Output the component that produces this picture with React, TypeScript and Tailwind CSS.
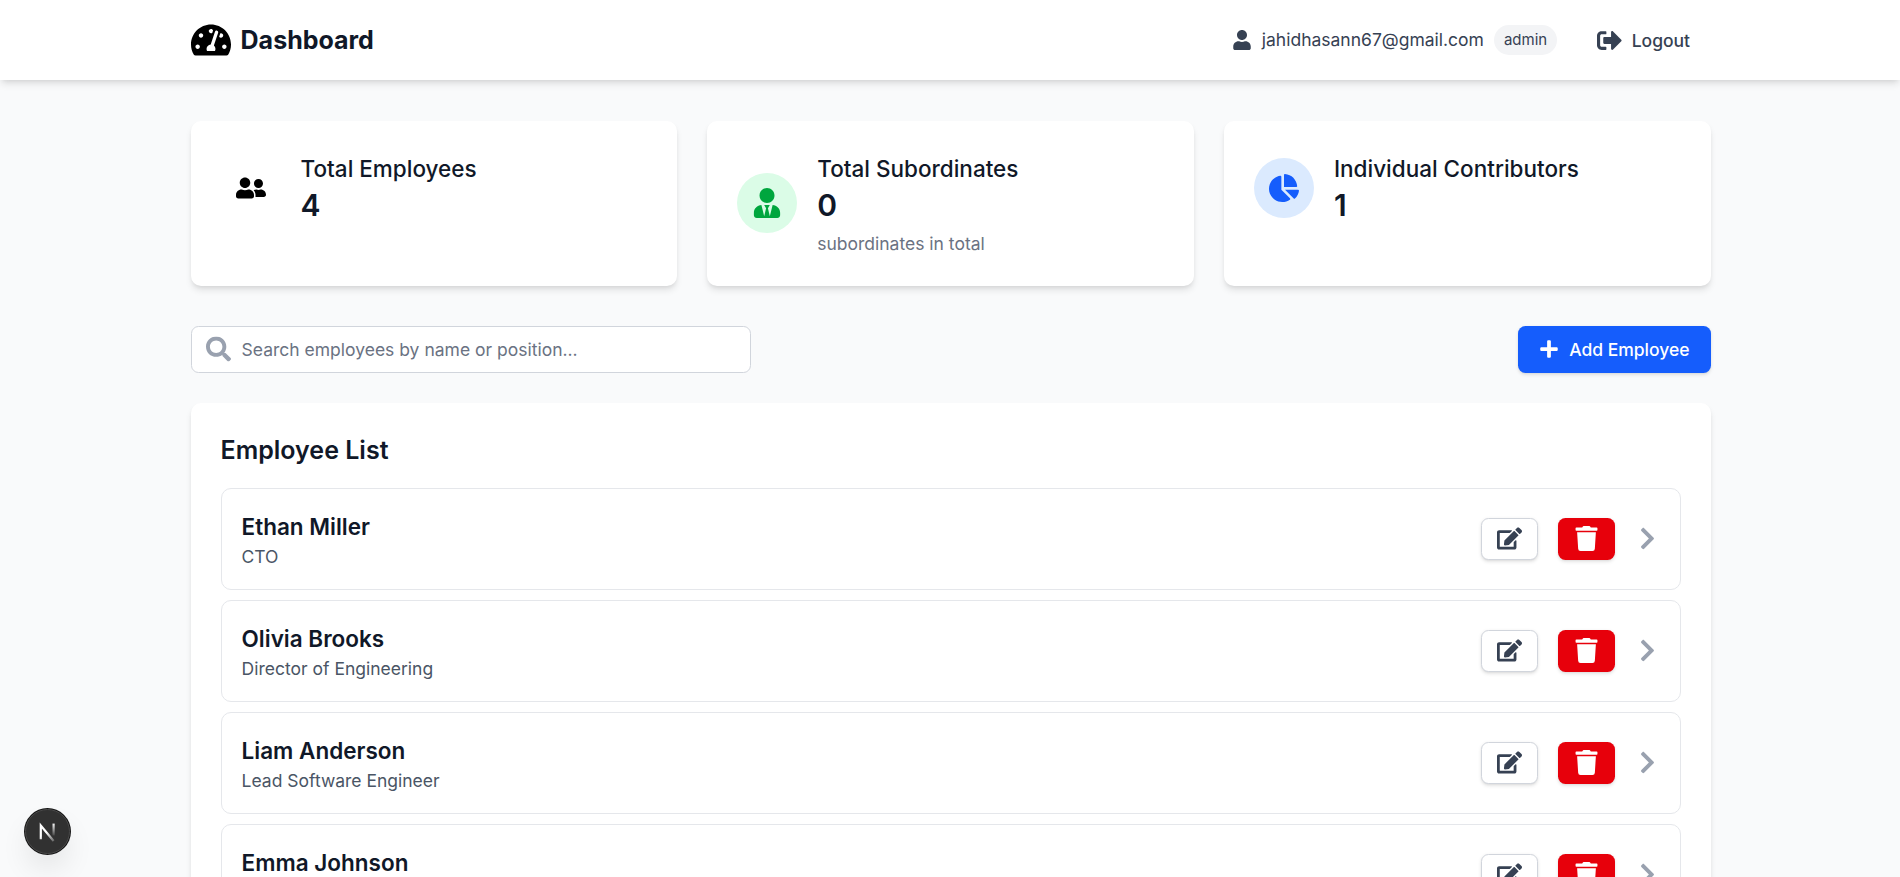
import type { ReactNode } from "react";
import {
  FaChartPie,
  FaChevronRight,
  FaEdit,
  FaPlus,
  FaSearch,
  FaSignOutAlt,
  FaTachometerAlt,
  FaTrash,
  FaUser,
  FaUserFriends,
  FaUserTie,
} from "react-icons/fa";

const employees = [
  { name: "Ethan Miller", position: "CTO" },
  { name: "Olivia Brooks", position: "Director of Engineering" },
  { name: "Liam Anderson", position: "Lead Software Engineer" },
  { name: "Emma Johnson", position: "Software Engineer" },
];

function Header() {
  return (
    <header className="bg-white pl-[0.9px] shadow-md">
      <div className="mx-auto flex h-16 max-w-7xl items-center justify-between px-8">
        <div className="flex items-center gap-2">
          <FaTachometerAlt className="h-8 w-8 text-black" />
          <h1 className="text-xl font-bold text-gray-900">Dashboard</h1>
        </div>
        <div className="flex items-center gap-[14.8px] pr-px -mr-px">
          <div className="flex items-center gap-2 text-sm text-gray-700">
            <FaUser className="h-4 w-4" />
            <span>jahidhasann67@gmail.com</span>
            <span className="rounded-full bg-gray-100 px-2 py-1 text-xs">admin</span>
          </div>
          <button className="-mr-[0.4px] flex items-center gap-2 rounded-md border border-transparent px-4 py-2 text-sm font-medium text-gray-700">
            <FaSignOutAlt className="h-5 w-5" />
            Logout
          </button>
        </div>
      </div>
    </header>
  );
}

type StatCardProps = {
  icon: ReactNode;
  iconClass: string;
  title: string;
  value: number;
  note?: string;
};

function StatCard({ icon, iconClass, title, value, note }: StatCardProps) {
  return (
    <div className="rounded-lg bg-white p-6 shadow-md">
      <div className="flex items-center gap-4">
        <div className={`flex h-12 w-12 items-center justify-center rounded-full ${iconClass}`}>{icon}</div>
        <div>
          <h3 className="text-lg font-medium text-gray-900">{title}</h3>
          <p className="text-2xl font-semibold text-gray-900">{value}</p>
          {note && <p className="mt-1 text-sm text-gray-500">{note}</p>}
        </div>
      </div>
    </div>
  );
}

function EmployeeRow({ name, position }: { name: string; position: string }) {
  return (
    <li className="flex items-center justify-between rounded-lg border border-gray-200 p-4">
      <div>
        <h3 className="text-lg font-semibold text-gray-900">{name}</h3>
        <p className="text-sm text-gray-600">{position}</p>
      </div>
      <div className="flex items-center gap-4">
        <button className="rounded-md border border-gray-300 bg-white px-3 py-1.5 text-gray-700 shadow-sm">
          <FaEdit className="h-5 w-5" />
        </button>
        <button className="rounded-md border border-transparent bg-red-600 px-3 py-1.5 text-white shadow-sm">
          <FaTrash className="h-5 w-5" />
        </button>
        <FaChevronRight className="h-5 w-5 text-gray-400" />
      </div>
    </li>
  );
}

function DevBadge() {
  return (
    <div className="fixed bottom-[22px] left-[24px] h-[47px] w-[47px] rounded-full shadow-[0_16px_32px_-8px_rgba(0,0,0,0.16)]">
      <svg viewBox="0 0 47 47" className="h-full w-full" fill="none">
        <defs>
          <linearGradient id="diag" x1="23" y1="24" x2="30" y2="34" gradientUnits="userSpaceOnUse">
            <stop stopColor="#fff" />
            <stop offset="1" stopColor="#fff" stopOpacity="0.2" />
          </linearGradient>
          <linearGradient id="stem" x1="29" y1="15" x2="29" y2="29" gradientUnits="userSpaceOnUse">
            <stop stopColor="#fff" />
            <stop offset="1" stopColor="#fff" stopOpacity="0" />
          </linearGradient>
        </defs>
        <circle cx="23.5" cy="23.5" r="23.5" fill="#171717" />
        <circle cx="23.5" cy="23.5" r="22" fill="#313131" stroke="#4a4a4a" />
        <path d="M16.8 31.3V17.5L29.6 33" stroke="url(#diag)" strokeWidth="2.2" />
        <path d="M29.6 15.6V27.5" stroke="url(#stem)" strokeWidth="2.2" />
      </svg>
    </div>
  );
}

export default function App() {
  return (
    <>
      <div className="h-[701.6px] overflow-hidden bg-gray-50 font-['Inter',sans-serif] [zoom:1.25]">
        <Header />
        <div className="pt-[0.8px] pl-[0.9px]">
          <main className="mx-auto max-w-7xl px-8 py-8">
            <section className="mb-8 grid grid-cols-3 gap-6">
              <StatCard
                icon={<FaUserFriends className="h-6 w-6" />}
                iconClass="text-black"
                title="Total Employees"
                value={4}
              />
              <StatCard
                icon={<FaUserTie className="h-6 w-6" />}
                iconClass="bg-green-100 text-green-600"
                title="Total Subordinates"
                value={0}
                note="subordinates in total"
              />
              <StatCard
                icon={<FaChartPie className="h-6 w-6" />}
                iconClass="bg-blue-100 text-blue-600"
                title="Individual Contributors"
                value={1}
              />
            </section>

            <section className="mb-6 flex items-center justify-between">
              <div className="relative w-full max-w-md">
                <FaSearch className="absolute top-1/2 left-3 h-5 w-5 -translate-y-1/2 text-gray-400" />
                <input
                  type="text"
                  placeholder="Search employees by name or position..."
                  className="block w-full rounded-md border border-gray-300 bg-white py-2 pr-3 pl-10 text-sm placeholder:text-gray-500"
                />
              </div>
              <button className="flex items-center gap-2 rounded-md border border-transparent bg-blue-600 px-4 py-2 text-sm font-medium text-white shadow-sm">
                <FaPlus className="h-4 w-4" />
                Add Employee
              </button>
            </section>

            <section className="rounded-lg bg-white p-6 shadow-md">
              <h2 className="mb-4 text-xl font-semibold text-gray-900">Employee List</h2>
              <ul className="flex flex-col gap-2">
                {employees.map((employee) => (
                  <EmployeeRow key={employee.name} {...employee} />
                ))}
              </ul>
            </section>
          </main>
        </div>
      </div>
      <DevBadge />
    </>
  );
}
